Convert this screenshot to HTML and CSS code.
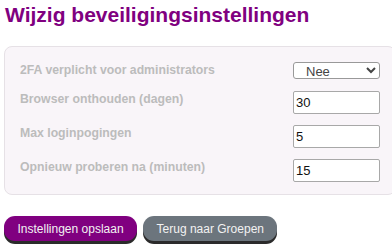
FILE: index.html
```html
<!DOCTYPE html>
<html lang="nl">

<head>
    <meta charset="UTF-8">
    <meta name="viewport" content="width=device-width, initial-scale=1.0">
    <title>Wijzig beveiligingsinstellingen</title>
    <link rel="stylesheet" href="styles.css">
</head>

<body>
    <h1>Wijzig beveiligingsinstellingen</h1>

    <form class="settings-form">
        <div class="settings-card">
            <div class="form-row">
                <label for="require2fa">2FA verplicht voor administrators</label>
                <select id="require2fa" class="field field-select">
                    <option>Nee</option>
                    <option>Ja</option>
                </select>
            </div>
            <div class="form-row">
                <label for="rememberDays">Browser onthouden (dagen)</label>
                <input id="rememberDays" class="field" type="text" value="30">
            </div>
            <div class="form-row">
                <label for="maxAttempts">Max loginpogingen</label>
                <input id="maxAttempts" class="field" type="text" value="5">
            </div>
            <div class="form-row">
                <label for="retryMinutes">Opnieuw proberen na (minuten)</label>
                <input id="retryMinutes" class="field" type="text" value="15">
            </div>
        </div>

        <div class="actions">
            <button type="submit" class="btn btn-primary">Instellingen opslaan</button>
            <button type="button" class="btn btn-secondary">Terug naar Groepen</button>
        </div>
    </form>
</body>

</html>
```

FILE: styles.css
```css
:root {
    --accent-color: #800080;
    --card-bg: #f9f5f9;
    --card-border: #e6e1e6;
    --label-color: #bcbcbc;
    --secondary-color: #6c757d;
}

* {
    box-sizing: border-box;
    margin: 0;
    padding: 0;
}

html {
    overflow: hidden;
}

body {
    font-family: "Liberation Sans", Arial, sans-serif;
    padding: 3px 4px;
    width: 400px;
}

h1 {
    font-size: 21px;
    line-height: 23px;
    color: var(--accent-color);
    margin-left: 1px;
    margin-bottom: 20px;
}

.settings-card {
    width: 392px;
    background-color: var(--card-bg);
    border: 1px solid var(--card-border);
    border-radius: 8px;
    padding: 15px 15px 12px;
}

.form-row {
    display: flex;
    align-items: flex-start;
    justify-content: space-between;
    margin-bottom: 11px;
}

.form-row:first-child {
    margin-bottom: 12px;
}

.form-row:last-child {
    margin-bottom: 0;
}

.form-row label {
    font-size: 12.25px;
    font-weight: bold;
    line-height: 17px;
    color: var(--label-color);
}

.field {
    width: 87px;
    height: 23px;
    font-family: "Liberation Sans", Arial, sans-serif;
    font-size: 13px;
    color: #111;
    background-color: #fff;
    border: 1px solid #a8a8a8;
    border-radius: 2px;
    padding: 3px 2px;
}

.field-select {
    height: 17px;
    padding: 0 0 0 8px;
    color: #444;
    border-color: #999;
    border-radius: 3px;
}

.actions {
    display: flex;
    gap: 6px;
    margin-top: 21px;
}

.btn {
    height: 25px;
    padding: 0 13.5px;
    font-family: "Liberation Sans", Arial, sans-serif;
    font-size: 12px;
    color: #f2f2f2;
    border: none;
    border-radius: 11px;
    box-shadow: 0 3px 0 #2b2b2b;
    cursor: pointer;
}

.btn-primary {
    background-color: var(--accent-color);
}

.btn-secondary {
    background-color: var(--secondary-color);
}
```
